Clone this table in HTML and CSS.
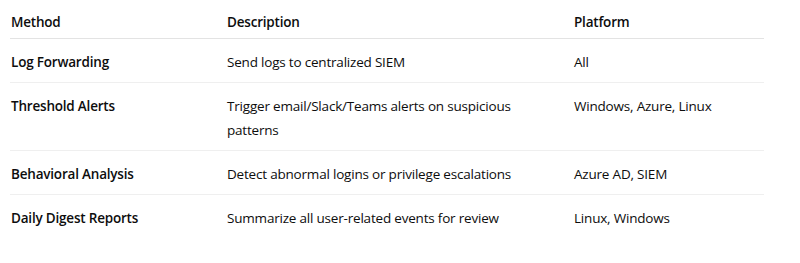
FILE: index.html
```html
<!DOCTYPE html>
<html lang="en">
<head>
  <meta charset="UTF-8">
  <meta name="viewport" content="width=device-width, initial-scale=1.0">
  <title>Monitoring Methods</title>
  <link rel="stylesheet" href="styles.css">
</head>
<body>

  <table class="methods">
    <colgroup>
      <col class="col-method">
      <col class="col-desc">
      <col class="col-platform">
    </colgroup>
    <thead>
      <tr>
        <th>Method</th>
        <th>Description</th>
        <th>Platform</th>
      </tr>
    </thead>
    <tbody>
      <tr>
        <td class="name">Log Forwarding</td>
        <td>Send logs to centralized SIEM</td>
        <td>All</td>
      </tr>
      <tr>
        <td class="name">Threshold Alerts</td>
        <td>Trigger email/Slack/Teams alerts on suspicious patterns</td>
        <td>Windows, Azure, Linux</td>
      </tr>
      <tr>
        <td class="name">Behavioral Analysis</td>
        <td>Detect abnormal logins or privilege escalations</td>
        <td>Azure AD, SIEM</td>
      </tr>
      <tr>
        <td class="name">Daily Digest Reports</td>
        <td>Summarize all user-related events for review</td>
        <td>Linux, Windows</td>
      </tr>
    </tbody>
  </table>

</body>
</html>
```

FILE: styles.css
```css
* {
  margin: 0;
  padding: 0;
  box-sizing: border-box;
}
body {
  font-family: 'Open Sans', sans-serif;
  font-size: 13.5px;
  letter-spacing: -0.2px;
  background-color: #fff;
  color: #0d0d0d;
  padding: 0 36px 0 10px;
}
.methods {
  width: 754px;
  border-collapse: collapse;
  table-layout: fixed;
}
.col-method {
  width: 216px;
}
.col-desc {
  width: 347px;
}
.col-platform {
  width: 191px;
}
.methods th,
.methods td {
  text-align: left;
  vertical-align: top;
  line-height: 24px;
  padding: 11px 36px 8px 1px;
}
.methods th {
  font-weight: 600;
  padding-top: 10px;
  padding-bottom: 4px;
  border-bottom: 1px solid #e3e3e3;
}
.methods td {
  border-bottom: 1px solid #efefef;
}
.methods tbody tr:last-child td {
  border-bottom: none;
}
.methods td.name {
  font-weight: 600;
}
```
